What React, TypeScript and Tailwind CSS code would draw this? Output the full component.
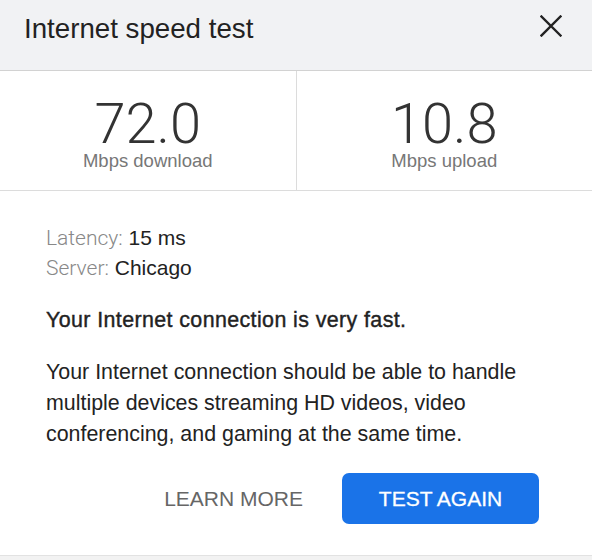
const sans = "font-['Liberation_Sans',Arial,sans-serif]";

function CloseIcon() {
  return (
    <svg width="22" height="22" viewBox="0 0 22 22" className="block">
      <path d="M1.5 1.5 L20.5 20.5 M20.5 1.5 L1.5 20.5" stroke="#222" strokeWidth="2.4" strokeLinecap="square" />
    </svg>
  );
}

function Stat({ value, label }: { value: string; label: string }) {
  return (
    <div className="flex flex-1 flex-col items-center pt-[27px]">
      <span className="font-['Roboto',sans-serif] text-[56px] font-light leading-[52px] text-[#333]">{value}</span>
      <span className={`${sans} mt-px text-[18.5px] leading-[20px] text-[#777]`}>{label}</span>
    </div>
  );
}

export default function App() {
  return (
    <div className={`${sans} flex h-[560px] w-[592px] flex-col bg-[#f2f2f2]`}>
      {/* Header */}
      <div className="flex h-[71px] items-start justify-between border-b border-[#d2d2d2] bg-[#f1f2f4] pl-6 pr-[30px] pt-[13px]">
        <h1 className="text-[27.7px] leading-[31px] text-[#222]">Internet speed test</h1>
        <div className="pt-[2px]">
          <CloseIcon />
        </div>
      </div>

      <div className="flex flex-col bg-white">
        {/* Results */}
        <div className="flex h-[120px] border-b border-[#dcdcdc]">
          <Stat value="72.0" label="Mbps download" />
          <div className="w-px bg-[#dcdcdc]" />
          <Stat value="10.8" label="Mbps upload" />
        </div>

        {/* Details */}
        <div className="flex flex-col pb-[31px] pl-[46px] pr-[53px] pt-[32px] text-[21px] text-[#222]">
          <p className="leading-[30px]">
            <span className="font-['Roboto',sans-serif] font-light text-[#888]">Latency:</span> 15 ms
          </p>
          <p className="leading-[30px]">
            <span className="font-['Roboto',sans-serif] font-light text-[#888]">Server:</span> Chicago
          </p>
          <p className="mt-[22px] text-[21.4px] leading-[30px] tracking-[0.4px] [-webkit-text-stroke:0.4px_#222]">
            Your Internet connection is very fast.
          </p>
          <p className="mt-[22px] text-[21.4px] leading-[31px]">
            Your Internet connection should be able to handle multiple devices streaming HD videos, video
            conferencing, and gaming at the same time.
          </p>

          <div className="mt-[23px] flex items-center justify-end gap-[39px]">
            <button className="text-[21px] text-[#666]">LEARN MORE</button>
            <button className="flex h-[51px] w-[197px] items-center justify-center rounded-[7px] bg-[#1a73e8] text-[21px] text-white [-webkit-text-stroke:0.3px_#fff]">
              TEST AGAIN
            </button>
          </div>
        </div>
      </div>
      <div className="border-t border-[#e2e2e2]" />
    </div>
  );
}
